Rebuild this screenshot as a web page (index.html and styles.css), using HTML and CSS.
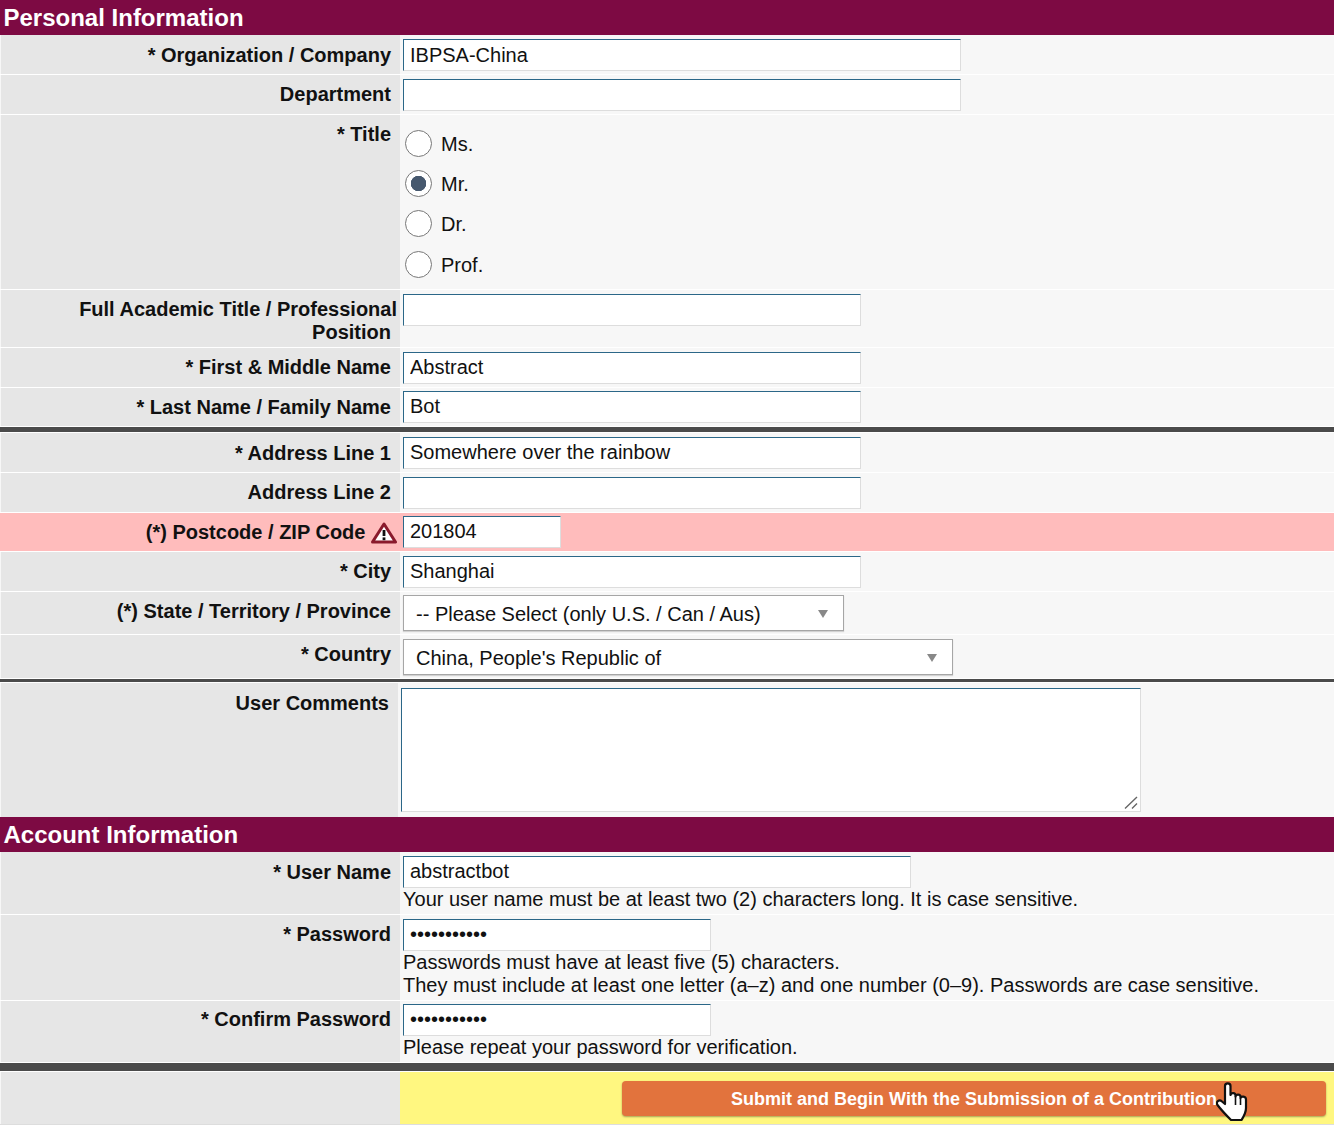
FILE: index.html
```html
<!DOCTYPE html>
<html lang="en">
<head>
    <meta charset="UTF-8">
    <meta name="viewport" content="width=device-width, initial-scale=1.0">
    <title>Registration</title>
    <link rel="stylesheet" href="styles.css">
</head>
<body>

<form class="reg-form">
    <h2 class="section-head">Personal Information</h2>

    <div class="row row-low">
        <label class="row-label">* Organization / Company</label>
        <div class="row-field"><input class="txt w-558" type="text" value="IBPSA-China"></div>
    </div>
    <div class="row">
        <label class="row-label">Department</label>
        <div class="row-field"><input class="txt w-558" type="text"></div>
    </div>
    <div class="row">
        <label class="row-label">* Title</label>
        <div class="row-field radio-list">
            <label class="radio-item"><input type="radio" name="title"> Ms.</label>
            <label class="radio-item"><input type="radio" name="title" checked> Mr.</label>
            <label class="radio-item"><input type="radio" name="title"> Dr.</label>
            <label class="radio-item"><input type="radio" name="title"> Prof.</label>
        </div>
    </div>
    <div class="row row-two-line">
        <label class="row-label"><span class="label-wide">Full Academic Title / Professional</span>Position</label>
        <div class="row-field"><input class="txt w-458" type="text"></div>
    </div>
    <div class="row">
        <label class="row-label">* First &amp; Middle Name</label>
        <div class="row-field"><input class="txt w-458" type="text" value="Abstract"></div>
    </div>
    <div class="row row-short">
        <label class="row-label">* Last Name / Family Name</label>
        <div class="row-field"><input class="txt w-458" type="text" value="Bot"></div>
    </div>

    <div class="divider"></div>

    <div class="row row-low">
        <label class="row-label">* Address Line 1</label>
        <div class="row-field"><input class="txt w-458" type="text" value="Somewhere over the rainbow"></div>
    </div>
    <div class="row">
        <label class="row-label">Address Line 2</label>
        <div class="row-field"><input class="txt w-458" type="text"></div>
    </div>
    <div class="row row-short row-error">
        <label class="row-label">(*) Postcode / ZIP Code
            <svg class="warn-icon" width="26" height="22" viewBox="0 0 26 22">
                <path d="M13 2 L24.5 20 H1.5 Z" fill="#fff" stroke="#8a1a2c" stroke-width="3" stroke-linejoin="round"/>
                <path d="M13 8 V14" stroke="#111" stroke-width="2.8"/>
                <rect x="11.6" y="15.4" width="2.8" height="2.8" fill="#111"/>
            </svg>
        </label>
        <div class="row-field"><input class="txt w-158" type="text" value="201804"></div>
    </div>
    <div class="row">
        <label class="row-label">* City</label>
        <div class="row-field"><input class="txt w-458" type="text" value="Shanghai"></div>
    </div>
    <div class="row row-short">
        <label class="row-label">(*) State / Territory / Province</label>
        <div class="row-field">
            <div class="select-wrap w-441">
                <select class="sel"><option>-- Please Select (only U.S. / Can / Aus)</option></select>
            </div>
        </div>
    </div>
    <div class="row">
        <label class="row-label">* Country</label>
        <div class="row-field">
            <div class="select-wrap w-550">
                <select class="sel"><option>China, People's Republic of</option></select>
            </div>
        </div>
    </div>

    <div class="divider divider-thin"></div>

    <div class="row row-low row-comments">
        <label class="row-label">User Comments</label>
        <div class="row-field">
            <div class="comments-wrap">
                <textarea class="comments"></textarea>
                <svg class="resize-grip" width="14" height="13" viewBox="0 0 14 13">
                    <path d="M1 12.5 L13 1 M8 12.5 L13 7.5" stroke="#666" stroke-width="1.4" fill="none"/>
                </svg>
            </div>
        </div>
    </div>

    <h2 class="section-head">Account Information</h2>

    <div class="row row-low">
        <label class="row-label">* User Name</label>
        <div class="row-field">
            <input class="txt w-508" type="text" value="abstractbot">
            <div class="hint">Your user name must be at least two (2) characters long. It is case sensitive.</div>
        </div>
    </div>
    <div class="row">
        <label class="row-label">* Password</label>
        <div class="row-field">
            <input class="txt w-308" type="password" value="abstractbot">
            <div class="hint">Passwords must have at least five (5) characters.<br>They must include at least one letter (a–z) and one number (0–9). Passwords are case sensitive.</div>
        </div>
    </div>
    <div class="row row-short row-tight">
        <label class="row-label">* Confirm Password</label>
        <div class="row-field">
            <input class="txt w-308" type="password" value="abstractbot">
            <div class="hint">Please repeat your password for verification.</div>
        </div>
    </div>

    <div class="divider divider-thick"></div>

    <div class="row row-submit">
        <div class="row-label"></div>
        <div class="submit-cell">
            <button type="button" class="submit-btn">Submit and Begin With the Submission of a Contribution</button>
            <svg class="hand-cursor" width="32" height="40" viewBox="0 0 32 40">
                <path d="M9 4 C9 0.5 14.5 0.5 14.5 4 L14.5 13 C15 10.5 19.5 10.5 19.5 13.5 L19.5 14.5 C20 12 24.5 12 24.5 15 L24.5 16 C25 14 30 14 30 17.5 L30 26 C30 31 28 34 25.5 38 L15 38 C12 35 6 29 1.5 23 C-0.5 20 3 17 6 19.5 L9 22 Z" fill="#fff" stroke="#111" stroke-width="2.2" stroke-linejoin="round"/>
                <path d="M19.5 14.5 V23 M24.5 16 V23" stroke="#111" stroke-width="1.6" fill="none"/>
            </svg>
        </div>
    </div>
</form>

</body>
</html>
```

FILE: styles.css
```css
body {
    margin: 0;
    font-family: "Liberation Sans", Arial, sans-serif;
    font-size: 20px;
    line-height: 23px;
    color: #111;
    background-color: #fff;
}

.section-head {
    margin: 0;
    padding: 6px 0 6px 3.5px;
    font-size: 24px;
    line-height: 23px;
    font-weight: bold;
    color: #fff;
    background-color: #7d0a43;
}

.row {
    display: grid;
    grid-template-columns: 400px 1fr;
    border-bottom: 1px solid #fff;
    background-color: #f7f7f7;
}

.row-label {
    display: block;
    box-sizing: border-box;
    padding: 8px 9px 0 0;
    text-align: right;
    font-weight: bold;
    background-color: #e6e6e6;
    border-left: 1px solid #f7f7f7;
}

.row-low .row-label {
    padding-top: 9px;
}

.row-two-line .row-label {
    padding-bottom: 3px;
}

.label-wide {
    display: block;
    margin-right: -6px;
    white-space: nowrap;
}

.row-field {
    padding: 4px 0 3px 3px;
    min-width: 0;
}

.row-short .row-field {
    padding-top: 3px;
}

.row-tight .row-label {
    padding-top: 7px;
}

.txt {
    display: block;
    box-sizing: border-box;
    height: 32px;
    padding: 0 6px;
    margin: 0;
    font-family: inherit;
    font-size: 20px;
    color: #111;
    background-color: #fff;
    border: 1px solid #ddd;
    border-top-color: #2b6788;
    border-left-color: #2b6788;
    outline: none;
}

.w-558 { width: 558px; }
.w-508 { width: 508px; }
.w-458 { width: 458px; }
.w-308 { width: 308px; }
.w-158 { width: 158px; }
.w-441 { width: 441px; }
.w-550 { width: 550px; }

.radio-list {
    padding: 9px 0 3.8px 5px;
}

.radio-item {
    display: flex;
    align-items: center;
    gap: 9px;
    height: 40.3px;
}

.radio-item input {
    appearance: none;
    box-sizing: border-box;
    width: 27px;
    height: 27px;
    margin: 0 0 2px;
    border: 1px solid #777;
    border-radius: 50%;
    background-color: #fff;
}

.radio-item input:checked {
    background: radial-gradient(circle, #46586e 0 7.5px, #fff 8px);
}

.row-error {
    background-color: #ffbcbc;
}

.row-error .row-label {
    padding-right: 3px;
    background-color: #ffbcbc;
    border-left: 0;
}

.warn-icon {
    vertical-align: -5px;
}

.select-wrap {
    position: relative;
}

.select-wrap::after {
    content: "";
    position: absolute;
    right: 16px;
    top: 15px;
    border-left: 5px solid transparent;
    border-right: 5px solid transparent;
    border-top: 8px solid #888;
    pointer-events: none;
}

.sel {
    appearance: none;
    display: block;
    box-sizing: border-box;
    width: 100%;
    height: 36px;
    margin: 0;
    padding: 2px 30px 0 12px;
    font-family: inherit;
    font-size: 20px;
    color: #111;
    background-color: #fff;
    border: 1px solid #a6a6a6;
    border-radius: 0;
    box-shadow: 0 1px 1px rgba(0, 0, 0, 0.15);
}

.divider {
    height: 5px;
    background-color: #4b4b4b;
    border-bottom: 1px solid #fff;
}

.divider-thin {
    height: 3px;
}

.divider-thick {
    height: 8px;
}

.row-comments {
    grid-template-columns: 398px 1fr;
    border-bottom: 0;
}

.row-comments .row-field {
    padding: 5px 0 5px 3px;
}

.comments-wrap {
    position: relative;
    width: 740px;
}

.comments {
    display: block;
    box-sizing: border-box;
    width: 100%;
    height: 124px;
    margin: 0;
    padding: 4px 7px;
    font-family: inherit;
    font-size: 20px;
    background-color: #fff;
    border: 1px solid #ddd;
    border-top-color: #2b6788;
    border-left-color: #2b6788;
    outline: none;
    resize: none;
}

.resize-grip {
    position: absolute;
    right: 3px;
    bottom: 3px;
}

.hint {
    line-height: 23px;
}

.row-submit {
    border-bottom: 1px solid #ddd;
}

.submit-cell {
    position: relative;
    display: flex;
    justify-content: flex-end;
    padding: 9px 8px 8px 0;
    background-color: #fff780;
}

.submit-btn {
    width: 704px;
    height: 35px;
    padding: 2px 0 0;
    font-family: inherit;
    font-size: 18px;
    font-weight: bold;
    color: #fff;
    background-color: #e2733d;
    border: 0;
    border-radius: 4px;
    box-shadow: 0 1px 2px rgba(0, 0, 0, 0.35);
    cursor: pointer;
}

.hand-cursor {
    position: absolute;
    left: 816px;
    top: 10px;
}
```
